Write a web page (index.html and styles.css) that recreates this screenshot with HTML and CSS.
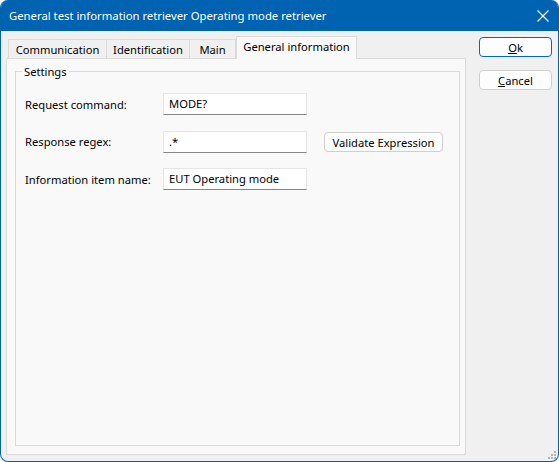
FILE: index.html
```html
<!DOCTYPE html>
<html>
<head>
<meta charset="utf-8">
<link rel="stylesheet" href="styles.css">
</head>
<body>
<div class="window">
  <div class="titlebar">
    <span class="title">General test information retriever Operating mode retriever</span>
    <svg class="close" width="12" height="12" viewBox="0 0 12 12"><path d="M0.5 0.5 L11.5 11.5 M11.5 0.5 L0.5 11.5" stroke="#fff" stroke-width="1.1" fill="none"/></svg>
  </div>
  <div class="client">
    <div class="tabarea">
      <div class="tabs">
        <div class="tab t-comm">Communication</div>
        <div class="tab t-ident">Identification</div>
        <div class="tab t-main">Main</div>
        <div class="tab active t-gen">General information</div>
      </div>
      <div class="panel">
        <fieldset class="group">
          <legend>Settings</legend>
          <div class="row">
            <label class="lbl">Request command:</label>
            <div class="input">MODE?</div>
          </div>
          <div class="row">
            <label class="lbl">Response regex:</label>
            <div class="input">.*</div>
            <button class="btn validate">Validate Expression</button>
          </div>
          <div class="row">
            <label class="lbl">Information item name:</label>
            <div class="input">EUT Operating mode</div>
          </div>
        </fieldset>
      </div>
    </div>
    <div class="side">
      <button class="btn default"><u>O</u>k</button>
      <button class="btn"><u>C</u>ancel</button>
    </div>
    <svg class="grip" width="9" height="9" viewBox="0 0 9 9">
      <rect x="6" y="0" width="2" height="2" fill="#b4b4b4"/>
      <rect x="3" y="3" width="2" height="2" fill="#b4b4b4"/>
      <rect x="6" y="3" width="2" height="2" fill="#b4b4b4"/>
      <rect x="0" y="6" width="2" height="2" fill="#b4b4b4"/>
      <rect x="3" y="6" width="2" height="2" fill="#b4b4b4"/>
      <rect x="6" y="6" width="2" height="2" fill="#b4b4b4"/>
    </svg>
  </div>
</div>
</body>
</html>
```

FILE: styles.css
```css
* { box-sizing: border-box; }
html, body { margin: 0; padding: 0; background: #ffffff; }
body {
  font-family: "Noto Sans", "Open Sans", sans-serif;
  font-size: 11.2px;
  color: #000;
}
.window {
  width: 559px;
  height: 462px;
  border: 1px solid #0063b1;
  border-top: 0;
  border-radius: 8px;
  overflow: hidden;
  background: #f0f0f0;
  display: flex;
  flex-direction: column;
}
.titlebar {
  height: 31px;
  flex: none;
  background: #0063b1;
  color: #fff;
  display: flex;
  align-items: center;
  padding-left: 9px;
  padding-right: 9px;
  margin: 0 -1px;
}
.title { flex: 1; font-size: 11.3px; padding-bottom: 1px; }
.close { flex: none; margin-right: 1px; margin-top: 1px; }
.client {
  flex: 1;
  display: flex;
  padding: 5px 0 0 5px;
  position: relative;
}
.tabarea {
  width: 460px;
  height: 424px;
  display: flex;
  flex-direction: column;
}
.tabs {
  height: 22px;
  display: flex;
  align-items: flex-end;
  padding-left: 2px;
  flex: none;
}
.tab {
  height: 19px;
  border: 1px solid #dadada;
  border-right: 0;
  border-bottom: 0;
  background: #f0f0f0;
  text-align: center;
  line-height: 19px;
  white-space: nowrap;
}
.t-comm { width: 98px; }
.t-ident { width: 83px; }
.t-main { width: 47px; border-right: 1px solid #dadada; }
.tab.active {
  height: 23px;
  margin-bottom: -1px;
  width: 121px;
  background: #f9f9f9;
  border-right: 1px solid #dadada;
  line-height: 19px;
  position: relative;
  z-index: 1;
}
.panel {
  height: 397px;
  background: #f9f9f9;
  border: 1px solid #dadada;
  padding: 5px 5px 8px 8px;
  display: flex;
}
.group {
  flex: 1;
  margin: 0;
  border: 1px solid #dadada;
  padding: 14px 0 0 9px;
  min-width: 0;
}
.group legend {
  padding: 0 2px;
  margin-left: -3px;
  line-height: 15px;
}
.row {
  display: flex;
  align-items: center;
  height: 22px;
  margin-bottom: 15.5px;
}
.lbl { width: 138px; flex: none; }
.input {
  width: 144px;
  height: 22px;
  background: #fff;
  border: 1px solid #e6e6e6;
  border-bottom-color: #868686;
  padding-left: 5px;
  line-height: 20px;
  white-space: nowrap;
}
.btn {
  font: inherit;
  color: #000;
  height: 20px;
  background: #fdfdfd;
  border: 1px solid #d0d0d0;
  border-radius: 4px;
  padding: 0;
  line-height: 17px;
}
.validate { width: 119px; margin-left: 17px; margin-top: 1px; }
.side {
  width: 73px;
  margin-left: 13px;
  padding-top: 1px;
  display: flex;
  flex-direction: column;
  gap: 13px;
}
.btn.default { border-color: #0067c0; }
.side .btn { width: 73px; }
.grip { position: absolute; right: 1px; bottom: 1px; }
```
